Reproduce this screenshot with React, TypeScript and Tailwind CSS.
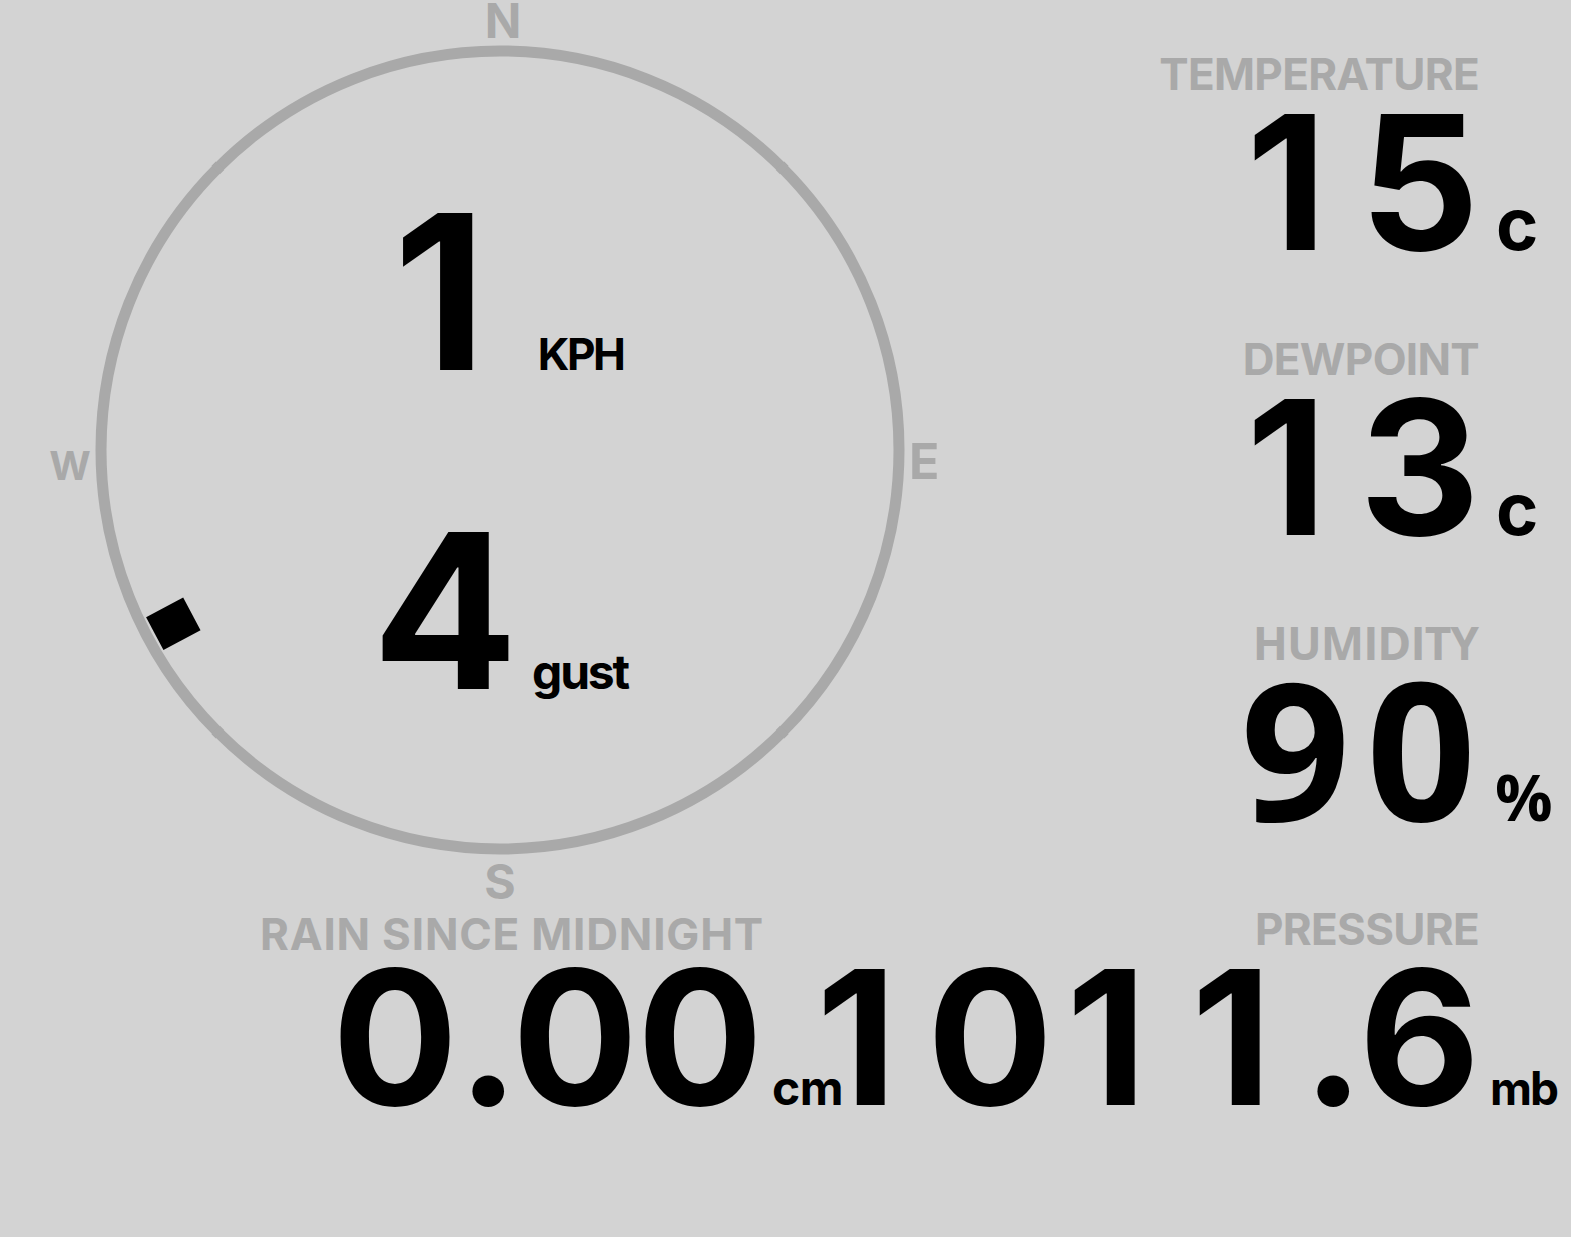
import React from "react";

const inter = "font-['Inter',sans-serif] font-bold";
const open = "font-['Open_Sans',sans-serif] font-bold";

type CellSpec = { digit: string; one: string; dot: string };

const BIG: CellSpec = {
  digit: "w-[125px] text-center",
  one: "w-[125px] pr-[16px] text-center",
  dot: "w-[55px] text-center",
};

const SPEED: CellSpec = {
  digit: "w-[144px] text-center",
  one: "w-[144px] pr-[18px] text-center",
  dot: "w-[60px] text-center",
};

function Cells({ text, spec, className }: { text: string; spec: CellSpec; className: string }) {
  return (
    <span className={`flex whitespace-nowrap ${className}`}>
      {Array.from(text).map((ch, i) => (
        <span key={i} className={`block ${ch === "." ? spec.dot : ch === "1" ? spec.one : spec.digit}`}>
          {ch}
        </span>
      ))}
    </span>
  );
}

function LabelRow({ text }: { text: string }) {
  return (
    <div className={`${inter} text-[44px] leading-[36px] tracking-[-0.7px] text-[#a9a9a9] whitespace-nowrap pr-[92px]`}>
      {text}
    </div>
  );
}

function BigValue({ value, unit, unitClass }: { value: string; unit: string; unitClass: string }) {
  return (
    <div className="mt-[15px] flex h-[150px] items-baseline justify-end">
      <Cells text={value} spec={BIG} className={`${inter} text-[187px] leading-[150px] text-black`} />
      <span className={`w-[89px] text-black whitespace-nowrap ${unitClass}`}>{unit}</span>
    </div>
  );
}

function Compass() {
  const cx = 500;
  const cy = 450;
  const r = 399;
  return (
    <div className="relative h-[911px] w-[1000px] shrink-0">
      <svg className="absolute inset-0" width="1000" height="911" viewBox="0 0 1000 911">
        <circle cx={cx} cy={cy} r={r} fill="none" stroke="#a9a9a9" strokeWidth="11" />
        {[45, 135, 225, 315].map((a) => (
          <rect
            key={a}
            x={cx - 3}
            y={cy - r - 6}
            width="6"
            height="12"
            fill="#a9a9a9"
            transform={`rotate(${a} ${cx} ${cy})`}
          />
        ))}
        <rect x={cx - 18.5} y={cy - 370 - 21} width="37" height="42" fill="#000" transform={`rotate(242 ${cx} ${cy})`} />
      </svg>
      <span className={`${inter} absolute left-[503px] top-0 -translate-x-1/2 text-[48px] leading-[42px] text-[#a9a9a9]`}>N</span>
      <span className={`${inter} absolute left-[500px] top-[858px] -translate-x-1/2 text-[48px] leading-[48px] text-[#a9a9a9]`}>S</span>
      <span className={`${inter} absolute left-[909px] top-[436px] text-[50px] leading-[50px] text-[#a9a9a9]`}>E</span>
      <span className={`${inter} absolute left-[70px] top-[446px] -translate-x-1/2 text-[40px] leading-[40px] text-[#a9a9a9]`}>W</span>
      <div className="relative flex flex-col pt-[212px]">
        <div className="flex h-[160px] items-baseline justify-center">
          <Cells text="1" spec={SPEED} className={`${inter} text-[216px] leading-[160px] text-black`} />
          <span className={`${inter} ml-[17px] text-[44px] leading-[44px] tracking-[-2.5px] text-black`}>KPH</span>
        </div>
        <div className="mt-[159px] flex h-[160px] items-baseline justify-center">
          <Cells text="4" spec={SPEED} className={`${inter} text-[216px] leading-[160px] text-black`} />
          <span className={`${inter} ml-[16px] text-[48px] leading-[48px] tracking-[-2.2px] text-black`}>gust</span>
        </div>
      </div>
    </div>
  );
}

export default function App() {
  return (
    <div className="min-h-screen w-full overflow-hidden bg-[#d3d3d3]">
      <div className="flex h-[911px]">
        <Compass />
        <div className="flex min-w-0 flex-1 flex-col pt-[56px]">
          <div className="flex h-[285px] flex-col items-end">
            <LabelRow text="TEMPERATURE" />
            <BigValue value="15" unit="c" unitClass={`${inter} pl-[14px] text-[72px] leading-[72px]`} />
          </div>
          <div className="flex h-[285px] flex-col items-end">
            <LabelRow text="DEWPOINT" />
            <BigValue value="13" unit="c" unitClass={`${inter} pl-[14px] text-[72px] leading-[72px]`} />
          </div>
          <div className="flex h-[285px] flex-col items-end">
            <div className={`${open} text-[46px] leading-[32px] tracking-[-1px] text-[#a9a9a9] whitespace-nowrap pr-[93px]`}>HUMIDITY</div>
            <div className="mt-[14px] flex h-[150px] items-baseline justify-end">
              <span className={`${open} text-[192px] leading-[150px] tracking-[16px] text-black whitespace-nowrap`}>90</span>
              <span className={`${open} w-[79px] pl-[3px] text-[64px] leading-[64px] text-black`}>%</span>
            </div>
          </div>
        </div>
      </div>
      <div className="flex">
        <div className="flex w-[836px] shrink-0 flex-col items-end">
          <div className={`${inter} mt-[5px] text-[44px] leading-[36px] tracking-[0.8px] text-[#a9a9a9] whitespace-nowrap pr-[72px]`}>RAIN SINCE MIDNIGHT</div>
          <div className="mt-[10px] flex h-[150px] items-baseline justify-end">
            <Cells text="0.00" spec={BIG} className={`${inter} text-[187px] leading-[150px] text-black`} />
            <span className={`${inter} w-[74px] pl-[10px] text-[48px] leading-[48px] tracking-[-0.5px] text-black whitespace-nowrap`}>cm</span>
          </div>
        </div>
        <div className="flex min-w-0 flex-1 flex-col items-end">
          <LabelRow text="PRESSURE" />
          <BigValue value="1011.6" unit="mb" unitClass={`${inter} pl-[8px] text-[46px] leading-[46px] tracking-[-2px]`} />
        </div>
      </div>
    </div>
  );
}
